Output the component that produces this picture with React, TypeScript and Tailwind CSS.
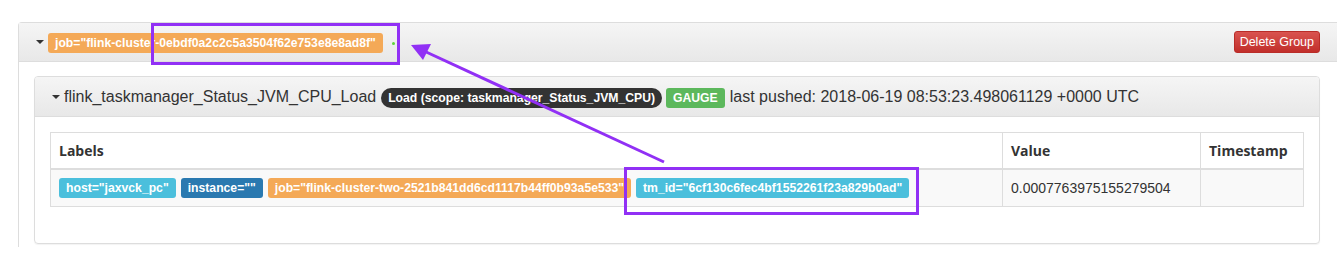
import React from "react";

const font = { fontFamily: '"Liberation Sans", Arial, sans-serif' };

function Badge({ children, color, pill }: { children: React.ReactNode; color: string; pill?: boolean }) {
  return (
    <span
      className={`inline-flex items-center h-[20px] px-[7px] text-[12.2px] font-bold text-white leading-none whitespace-nowrap ${pill ? "rounded-full" : "rounded-[3px]"} ${color}`}
    >
      {children}
    </span>
  );
}

function Caret() {
  return (
    <span className="inline-block w-0 h-0 border-l-[4px] border-r-[4px] border-t-[4px] border-l-transparent border-r-transparent border-t-[#333]" />
  );
}

export default function App() {
  return (
    <div className="relative w-[1337px] h-[260px] overflow-hidden bg-white text-[#333]" style={font}>
      <div className="pt-[22px] pl-[18px]">
        {/* outer panel */}
        <div className="w-[1325px] h-[225px] border-t border-l border-r border-[#ddd] rounded-tl-[4px]">
          <div className="h-[39px] flex items-center pl-[17px] pr-[22px] border-b border-[#ddd] bg-gradient-to-b from-[#f5f5f5] to-[#e8e8e8]">
            <Caret />
            <span className="ml-[4px]">
              <Badge color="bg-[#f4a957]">job="flink-cluster-0ebdf0a2c2c5a3504f62e753e8e8ad8f"</Badge>
            </span>
            <span className="ml-[9px] mt-[2px] w-[3px] h-[3px] rounded-full bg-[#5fd33a]" />
            <div className="flex-1" />
            <button className="h-[22px] px-[5px] text-[12.5px] text-white rounded-[3px] border border-[#b92c28] bg-gradient-to-b from-[#d9534f] to-[#c12e2a] leading-none" style={font}>
              Delete Group
            </button>
          </div>
          <div className="pl-[15px] pt-[14px]">
            {/* inner panel */}
            <div className="w-[1286px] h-[168px] border border-[#ddd] rounded-[4px] shadow-[0_1px_1px_rgba(0,0,0,0.05)]">
              <div className="h-[40px] flex items-center pl-[17px] border-b border-[#ddd] bg-gradient-to-b from-[#f5f5f5] to-[#e8e8e8] rounded-t-[3px]">
                <Caret />
                <span className="ml-[4px] text-[16px] text-[#333]">flink_taskmanager_Status_JVM_CPU_Load</span>
                <span className="ml-[5px]">
                  <Badge color="bg-[#333]" pill>Load (scope: taskmanager_Status_JVM_CPU)</Badge>
                </span>
                <span className="ml-[4px]">
                  <Badge color="bg-[#5cb85c]">GAUGE</Badge>
                </span>
                <span className="ml-[5px] text-[16px] text-[#333]">last pushed: 2018-06-19 08:53:23.498061129 +0000 UTC</span>
              </div>
              <div className="pl-[15px] pt-[15px]">
                <div className="w-[1254px] border border-[#ddd] text-[14px]">
                  <div className="flex h-[37px] border-b-2 border-[#ddd]">
                    <div className="w-[952px] border-r border-[#ddd] flex items-center pl-[8px] font-bold" style={{ fontFamily: '"Open Sans", sans-serif' }}>Labels</div>
                    <div className="w-[198px] border-r border-[#ddd] flex items-center pl-[8px] font-bold" style={{ fontFamily: '"Open Sans", sans-serif' }}>Value</div>
                    <div className="flex-1 flex items-center pl-[8px] font-bold" style={{ fontFamily: '"Open Sans", sans-serif' }}>Timestamp</div>
                  </div>
                  <div className="flex h-[36px] bg-[#f9f9f9]">
                    <div className="w-[952px] border-r border-[#ddd] flex items-center pl-[8px] gap-[5px]">
                      <Badge color="bg-[#4bbfdc]">host="jaxvck_pc"</Badge>
                      <Badge color="bg-[#2a79b0]">instance=""</Badge>
                      <Badge color="bg-[#f4a957]">job="flink-cluster-two-2521b841dd6cd1117b44ff0b93a5e533"</Badge>
                      <Badge color="bg-[#4bbfdc]">tm_id="6cf130c6fec4bf1552261f23a829b0ad"</Badge>
                    </div>
                    <div className="w-[198px] border-r border-[#ddd] flex items-center pl-[8px] text-[#333]">0.0007763975155279504</div>
                    <div className="flex-1" />
                  </div>
                </div>
              </div>
            </div>
          </div>
        </div>
      </div>

      {/* annotations */}
      <div className="absolute left-[151px] top-[23px] w-[249px] h-[42px] border-[3px] border-[#9130f5]" />
      <div className="absolute left-[624px] top-[167px] w-[295px] h-[48px] border-[3px] border-[#9130f5]" />
      <svg className="absolute left-0 top-0" width="1337" height="260">
        <line x1="664" y1="162" x2="424" y2="51" stroke="#9130f5" strokeWidth="3" />
        <polygon points="411,45 431,44 423,60" fill="#9130f5" />
      </svg>
    </div>
  );
}
